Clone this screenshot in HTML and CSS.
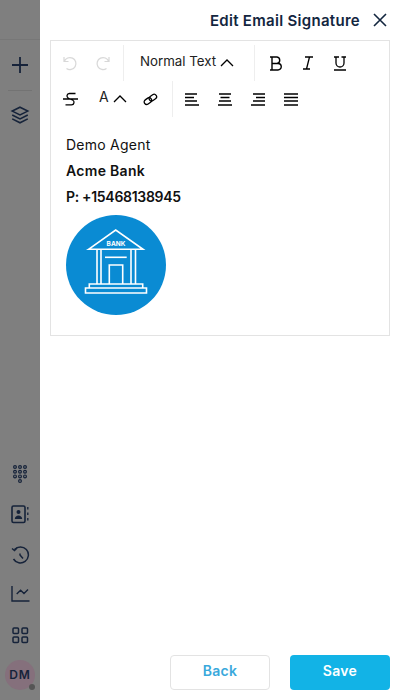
FILE: index.html
```html
<!DOCTYPE html>
<html lang="en">
<head>
    <meta charset="UTF-8">
    <meta name="viewport" content="width=device-width, initial-scale=1.0">
    <title>Edit Email Signature</title>
    <link rel="stylesheet" href="styles.css">
</head>
<body>
    <div class="app">
        <div class="sidebar">
            <div class="side-top">
                <svg class="ic" width="20" height="20" viewBox="0 0 20 20"><path d="M10 2v16M2 10h16" stroke-width="1.800"/></svg>
                <div class="side-line"></div>
                <svg class="ic" width="20" height="20" viewBox="0 0 18 18"><path d="M9 2l7 3.500-7 3.500-7-3.500zM2 9l7 3.500L16 9M2 12.500L9 16l7-3.500" stroke-width="1.400"/></svg>
            </div>
            <div class="side-bottom">
                <svg class="ic" width="14" height="19" viewBox="0 0 14 19"><g stroke-width="1.200"><circle cx="2" cy="2" r="1.400"/><circle cx="7" cy="2" r="1.400"/><circle cx="12" cy="2" r="1.400"/><circle cx="2" cy="6.700" r="1.400"/><circle cx="7" cy="6.700" r="1.400"/><circle cx="12" cy="6.700" r="1.400"/><circle cx="2" cy="11.400" r="1.400"/><circle cx="7" cy="11.400" r="1.400"/><circle cx="12" cy="11.400" r="1.400"/><circle cx="7" cy="16.100" r="1.400"/></g></svg>
                <svg class="ic" width="18" height="19" viewBox="0 0 18 19"><rect x="1" y="1" width="13" height="16.500" rx="1.500" stroke-width="1.600"/><circle cx="7.500" cy="7" r="2" class="solid"/><path d="M3.800 14c0-2.300 1.800-3.500 3.700-3.500s3.700 1.200 3.700 3.500z" class="solid"/><path d="M16.800 2v2.500M16.800 7.500v2.500M16.800 13v2.500" stroke-width="1.300"/></svg>
                <svg class="ic" width="19" height="19" viewBox="0 0 19 19"><path d="M3.500 4.500A8 8 0 1 1 2.500 14" stroke-width="1.500"/><path d="M1 3.500l2.500 2L6 3" stroke-width="1.500"/><path d="M9 8.500l0 1.500 3 3.500" stroke-width="1.500"/></svg>
                <svg class="ic" width="19" height="17" viewBox="0 0 19 17"><path d="M1 1v15h17.500" stroke-width="1.400"/><path d="M5.700 9l3.900-3.700 3.400 3.300 4-4" stroke-width="1.400"/></svg>
                <svg class="ic side-grid" width="17" height="17" viewBox="0 0 17 17"><g stroke-width="1.500"><rect x="1" y="1" width="5.500" height="5.500" rx="1"/><rect x="10" y="1" width="5.500" height="5.500" rx="1"/><rect x="1" y="10" width="5.500" height="5.500" rx="1"/><rect x="10" y="10" width="5.500" height="5.500" rx="1"/></g></svg>
                <div class="avatar">DM<span class="status"></span></div>
            </div>
        </div>

        <div class="panel">
            <div class="panel-head">
                <span class="panel-title">Edit Email Signature</span>
                <svg class="ic close" width="14" height="14" viewBox="0 0 14 14"><path d="M1 1l12 12M13 1L1 13" stroke-width="1.600"/></svg>
            </div>

            <div class="editor">
                <div class="toolbar">
                    <div class="tool-group history">
                        <svg class="ic faded" width="16" height="16" viewBox="0 0 16 16"><path d="M2 2v4.500h4.500M2.300 6.500A6 6 0 1 1 4.500 13.500" stroke-width="1.200"/></svg>
                        <svg class="ic faded" width="16" height="16" viewBox="0 0 16 16"><path d="M14 2v4.500H9.500M13.700 6.500A6 6 0 1 0 11.500 13.500" stroke-width="1.200"/></svg>
                    </div>
                    <div class="tool-group block-type">
                        <span>Normal Text</span>
                        <svg class="ic" width="14" height="8" viewBox="0 0 14 8"><path d="M1 7l6-6 6 6" stroke-width="1.300"/></svg>
                    </div>
                    <div class="tool-group marks">
                        <svg class="ic" width="14" height="15" viewBox="0 0 14 15"><path d="M1 1h7a3.300 3.300 0 0 1 0 6.500H3M3 7.500h6a3.200 3.200 0 0 1 0 6.500H1M3 1v13" stroke-width="1.400"/></svg>
                        <svg class="ic" width="12" height="14" viewBox="0 0 12 14"><path d="M3 1h8M1 13h7M7.500 1L4.500 13" stroke-width="1.300"/></svg>
                        <svg class="ic" width="14" height="15" viewBox="0 0 14 15"><path d="M1 1h5M8.500 1H13M3 1v6a4 4 0 0 0 8 0V1M1 14h12" stroke-width="1.300"/></svg>
                    </div>
                    <div class="tool-group more">
                        <svg class="ic" width="15" height="16" viewBox="0 0 15 16"><path d="M12.500 2.500H6.500a2.500 2.500 0 0 0-1 4.800L9.500 9a2.500 2.500 0 0 1-1 4.800H2.500M0 8h15" stroke-width="1.300"/></svg>
                        <div class="font-size">
                            <span>A</span>
                            <svg class="ic" width="14" height="8" viewBox="0 0 14 8"><path d="M1 7l6-6 6 6" stroke-width="1.300"/></svg>
                        </div>
                        <svg class="ic" width="15" height="13" viewBox="0 0 15 13"><g transform="rotate(-35 7.500 6.500)" stroke-width="1.300"><rect x="0.500" y="3.800" width="8" height="5" rx="2.500"/><rect x="6.500" y="3.800" width="8" height="5" rx="2.500"/></g></svg>
                    </div>
                    <div class="tool-group aligns">
                        <svg class="ic" width="14" height="13" viewBox="0 0 14 13"><path d="M0 1h12M0 4.500h9M0 8h12M0 12h14" stroke-width="1.300"/></svg>
                        <svg class="ic" width="14" height="13" viewBox="0 0 14 13"><path d="M1 1h12M2.500 4.500h9M1 8h12M0 12h14" stroke-width="1.300"/></svg>
                        <svg class="ic" width="14" height="13" viewBox="0 0 14 13"><path d="M2 1h12M5 4.500h9M2 8h12M0 12h14" stroke-width="1.300"/></svg>
                        <svg class="ic" width="14" height="13" viewBox="0 0 14 13"><path d="M0 1h14M0 4.500h14M0 8h14M0 12h14" stroke-width="1.300"/></svg>
                    </div>
                </div>

                <div class="signature">
                    <p class="agent">Demo Agent</p>
                    <p class="bold">Acme Bank</p>
                    <p class="bold phone">P: +15468138945</p>
                    <div class="logo">
                        <svg width="100" height="100" viewBox="0 0 100 100">
                            <circle cx="50" cy="50" r="50" fill="#0a8bd3"/>
                            <g fill="none" stroke="#fff" stroke-width="1.600">
                                <path d="M22.500 34.300L49.700 15l27.300 19.300z"/>
                                <path d="M31 34.300V69M35 34.300V69M65 34.300V69M69.500 34.300V69"/>
                                <path d="M39 42.300h21.700"/>
                                <path d="M43.300 69V50h13.400v19"/>
                                <path d="M23.300 73V69h53.400v4"/>
                                <path d="M19.500 73h61v5h-61z"/>
                            </g>
                            <text x="50" y="30.500" class="logo-text">BANK</text>
                        </svg>
                    </div>
                </div>
            </div>

            <div class="panel-foot">
                <button class="btn btn-back">Back</button>
                <button class="btn btn-save">Save</button>
            </div>
        </div>
    </div>
</body>
</html>
```

FILE: styles.css
```css
* {
    box-sizing: border-box;
}

body {
    margin: 0;
    font-family: 'Inter', sans-serif;
    color: #13263f;
}

.app {
    display: flex;
    width: 400px;
    height: 700px;
    overflow: hidden;
}

.ic {
    display: block;
    flex: none;
    fill: none;
    stroke: #000;
}

.ic .solid {
    fill: #16233a;
    stroke: none;
}

/* dimmed nav behind the panel */
.sidebar {
    width: 40px;
    height: 100%;
    background: #7f7f7f;
    display: flex;
    flex-direction: column;
    justify-content: space-between;
    align-items: center;
}

.sidebar .ic {
    stroke: #16233a;
}

.side-top {
    width: 100%;
    margin-top: 39px;
    border-top: 1px solid #777;
    padding-top: 15px;
    display: flex;
    flex-direction: column;
    align-items: center;
}

.side-line {
    width: 24px;
    height: 1px;
    background: #737373;
    margin: 15px 0 14px;
}

.side-bottom {
    display: flex;
    flex-direction: column;
    align-items: center;
    gap: 21px;
    padding-bottom: 10px;
}

.side-bottom .side-grid {
    margin: 4px 0 -5px;
}

.avatar {
    position: relative;
    width: 30px;
    height: 30px;
    border-radius: 50%;
    background: #85707c;
    font-size: 12px;
    font-weight: 600;
    letter-spacing: 1px;
    line-height: 30px;
    text-align: center;
    color: #16233a;
}

.status {
    position: absolute;
    right: 0;
    bottom: 0;
    width: 6px;
    height: 6px;
    border-radius: 50%;
    background: #555;
}

.panel {
    flex: 1;
    background: #fff;
    padding: 0 10px;
    display: flex;
    flex-direction: column;
}

.panel-head {
    height: 40px;
    display: flex;
    align-items: center;
    justify-content: flex-end;
    gap: 13px;
    padding-right: 3px;
}

.panel-title {
    font-size: 15px;
    font-weight: 600;
    letter-spacing: 0.3px;
    color: #13263f;
}

.close {
    stroke: #13263f;
}

.editor {
    height: 296px;
    border: 1px solid #e3e3e3;
}

.toolbar {
    display: flex;
    flex-wrap: wrap;
    padding: 4px 0 0 5px;
}

.tool-group {
    height: 36px;
    display: flex;
    align-items: center;
}

.history {
    gap: 17px;
    width: 67px;
    padding-left: 6px;
}

.faded {
    opacity: 0.15;
}

.block-type {
    width: 131px;
    padding-left: 16px;
    gap: 4px;
    border-left: 1px solid #eee;
    font-size: 13.300px;
    color: #222;
}

.block-type span {
    margin-top: -5px;
}

.marks {
    width: 120px;
    border-left: 1px solid #eee;
    padding-left: 14px;
    gap: 19px;
}

.more {
    width: 116px;
    padding-left: 7px;
}

.font-size {
    display: flex;
    align-items: center;
    gap: 4px;
    margin: 0 16px 0 21px;
    font-size: 14px;
    color: #222;
}

.font-size span {
    margin-top: -6px;
}

.aligns {
    border-left: 1px solid #eee;
    padding-left: 12px;
    gap: 19px;
}

.signature {
    padding: 19px 15px 0;
    font-size: 14px;
    color: #111;
}

.signature p {
    margin: 0 0 9px;
    line-height: 17px;
}

.signature .agent {
    letter-spacing: 0.25px;
}

.signature .bold {
    font-weight: 600;
    letter-spacing: 0.3px;
}

.signature .phone {
    margin-bottom: 10px;
    letter-spacing: -0.3px;
}

.logo svg {
    display: block;
}

.logo-text {
    fill: #fff;
    font-family: 'Inter', sans-serif;
    font-size: 6.500px;
    font-weight: 700;
    text-anchor: middle;
}

.panel-foot {
    margin-top: auto;
    padding-bottom: 10px;
    display: flex;
    justify-content: flex-end;
    gap: 20px;
}

.btn {
    width: 100px;
    height: 35px;
    padding: 0 0 4px;
    border-radius: 4px;
    font-family: 'Inter', sans-serif;
    font-size: 14px;
    font-weight: 600;
    letter-spacing: 0.3px;
    cursor: pointer;
}

.btn-back {
    background: #fff;
    border: 1px solid #e3e3e3;
    color: #3aa9dc;
}

.btn-save {
    background: #12b3e6;
    border: none;
    color: #fff;
}
```
